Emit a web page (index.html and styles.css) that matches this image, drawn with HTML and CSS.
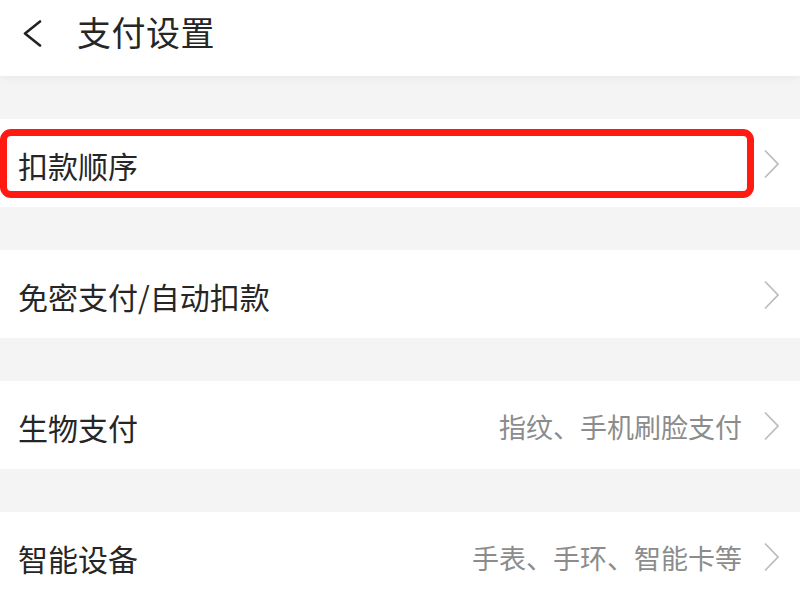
FILE: index.html
```html
<!DOCTYPE html>
<html lang="zh-CN">
<head>
    <meta charset="UTF-8">
    <meta name="viewport" content="width=device-width, initial-scale=1.0">
    <title>支付设置</title>
    <link rel="stylesheet" href="styles.css">
</head>
<body>
    <div class="page">
        <div class="header">
            <svg class="back-icon" width="22" height="27" viewBox="0 0 22 27">
                <polyline points="19,1.5 4,13.5 19,25.5" fill="none" stroke="#222" stroke-width="2.6" stroke-linecap="round" stroke-linejoin="round"/>
            </svg>
            <h1 class="title">支付设置</h1>
        </div>

        <div class="gap"></div>

        <div class="row">
            <span class="row-label">扣款顺序</span>
            <span class="row-right">
                <svg class="chevron" width="17" height="30" viewBox="0 0 17 30">
                    <polyline points="2,1.5 15,15 2,28.5" fill="none" stroke="#bdbdbd" stroke-width="1.8"/>
                </svg>
            </span>
            <div class="highlight"></div>
        </div>

        <div class="gap"></div>

        <div class="row">
            <span class="row-label">免密支付/自动扣款</span>
            <span class="row-right">
                <svg class="chevron" width="17" height="30" viewBox="0 0 17 30">
                    <polyline points="2,1.5 15,15 2,28.5" fill="none" stroke="#bdbdbd" stroke-width="1.8"/>
                </svg>
            </span>
        </div>

        <div class="gap"></div>

        <div class="row">
            <span class="row-label">生物支付</span>
            <span class="row-right">
                <span class="row-hint">指纹、手机刷脸支付</span>
                <svg class="chevron" width="17" height="30" viewBox="0 0 17 30">
                    <polyline points="2,1.5 15,15 2,28.5" fill="none" stroke="#bdbdbd" stroke-width="1.8"/>
                </svg>
            </span>
        </div>

        <div class="gap"></div>

        <div class="row">
            <span class="row-label">智能设备</span>
            <span class="row-right">
                <span class="row-hint">手表、手环、智能卡等</span>
                <svg class="chevron" width="17" height="30" viewBox="0 0 17 30">
                    <polyline points="2,1.5 15,15 2,28.5" fill="none" stroke="#bdbdbd" stroke-width="1.8"/>
                </svg>
            </span>
        </div>
    </div>
</body>
</html>
```

FILE: styles.css
```css
body {
    font-family: "Noto Sans CJK SC", "Noto Sans", sans-serif;
    background: #f4f4f4;
    margin: 0;
    color: #262626;
}
.page {
    width: 800px;
    height: 600px;
    overflow: hidden;
}
.header {
    position: relative;
    z-index: 1;
    height: 76px;
    background: white;
    display: flex;
    align-items: center;
    padding: 0 0 12px 21px;
    box-sizing: border-box;
    box-shadow: 0 3px 8px rgba(0,0,0,0.04);
}
.back-icon {
    display: block;
    margin-top: 3px;
}
.title {
    margin: 0 0 0 34px;
    font-size: 34px;
    font-weight: 400;
    line-height: 1;
    color: #262626;
    letter-spacing: 0.5px;
}
.gap {
    height: 43px;
}
.gap:first-of-type {
    height: 42px;
}
.row {
    position: relative;
    height: 88px;
    background: white;
    display: flex;
    align-items: center;
    justify-content: space-between;
    padding: 3px 20px 0 18px;
    box-sizing: border-box;
}
.row-label {
    font-size: 30px;
    line-height: 1;
    color: #262626;
}
.row-right {
    display: flex;
    align-items: center;
    gap: 21px;
}
.row-hint {
    font-size: 27px;
    line-height: 1;
    color: #8c8c8c;
}
.chevron {
    display: block;
    margin-top: -2px;
}
.highlight {
    position: absolute;
    left: 0;
    top: 10px;
    width: 754px;
    height: 69px;
    border: 7px solid #ff1a12;
    border-radius: 11px;
    box-sizing: border-box;
}
```
